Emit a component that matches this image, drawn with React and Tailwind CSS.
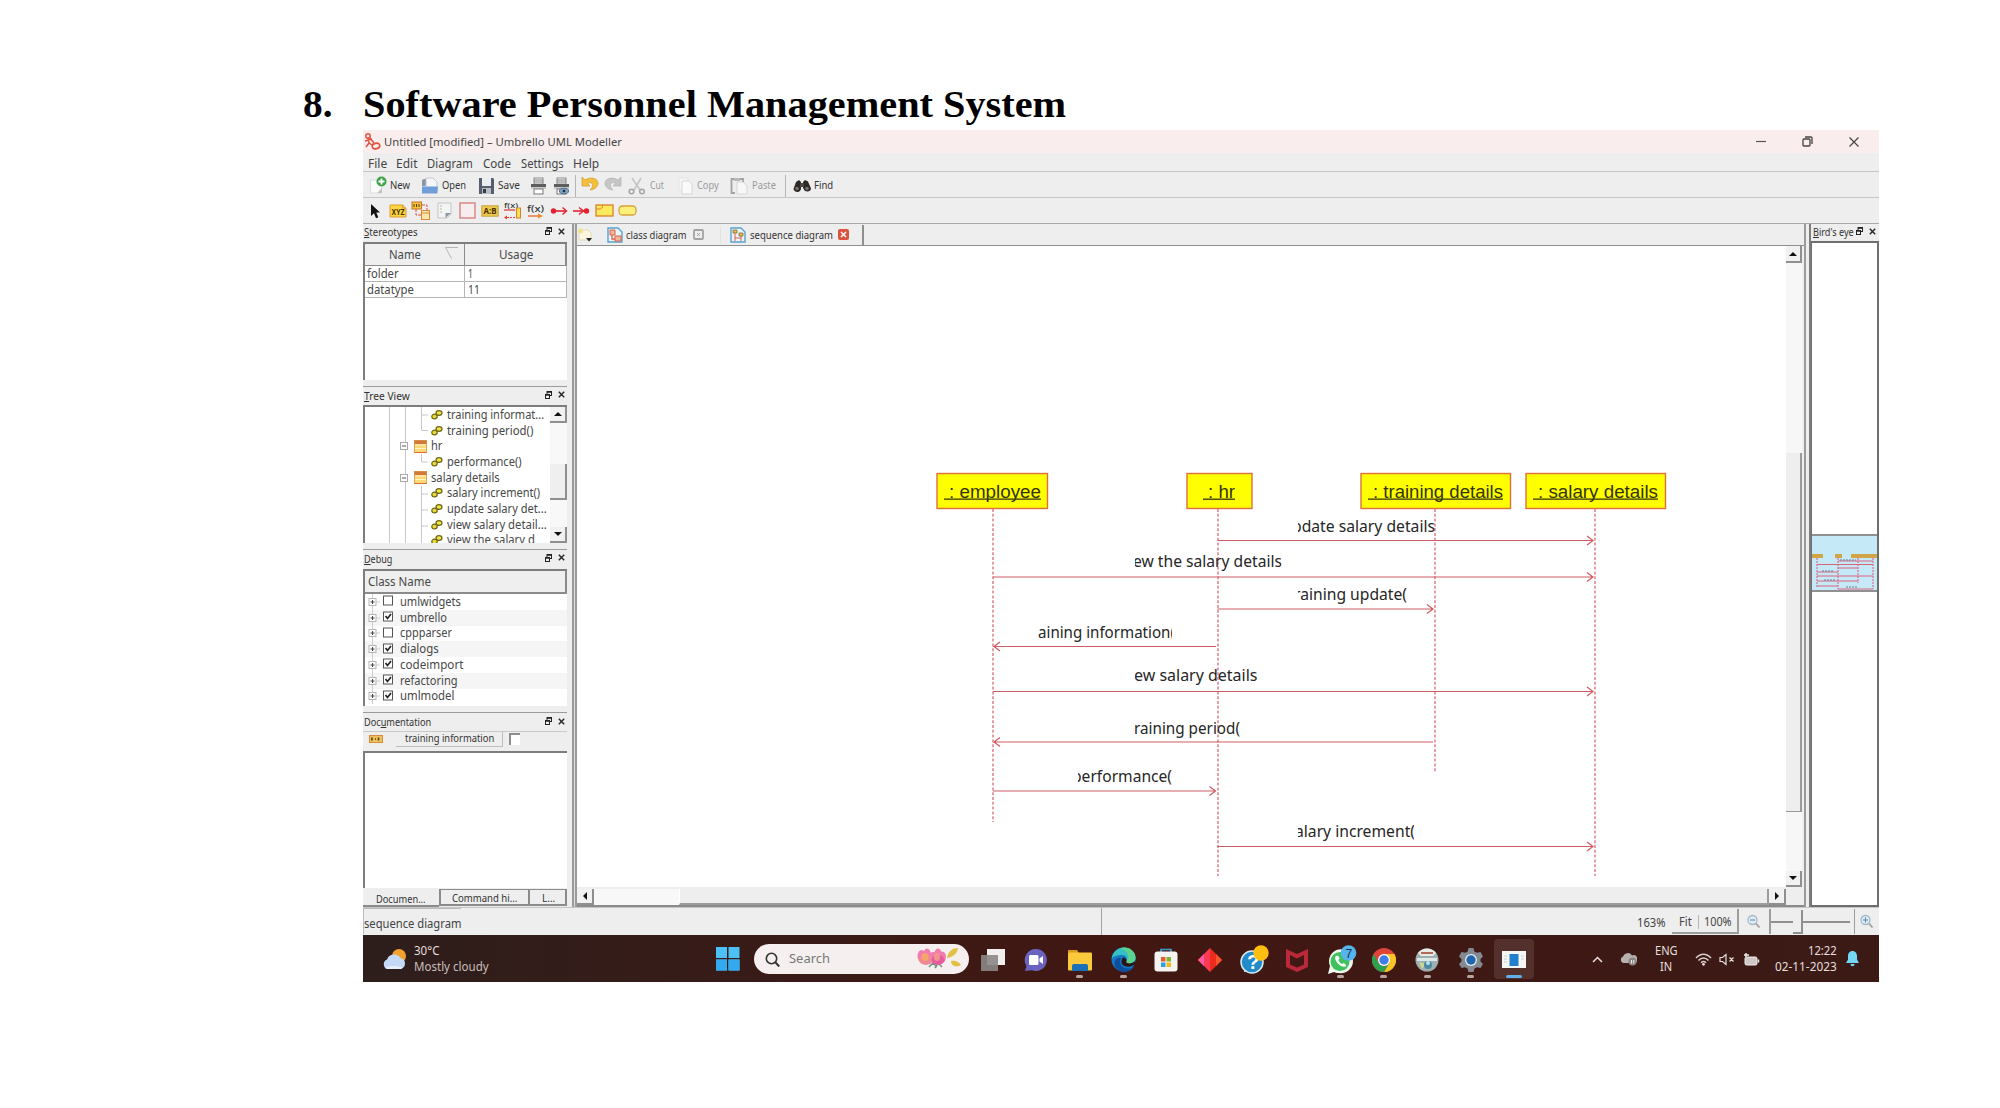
import React, { useLayoutEffect, useRef, useState } from "react";

const UI = "font-['Noto_Sans','Open_Sans',sans-serif]";

function Fit({ w, className = "", children }) {
  const ref = useRef(null);
  const [k, setK] = useState(1);
  useLayoutEffect(() => {
    const n = ref.current.offsetWidth;
    if (n) setK(w / n);
  }, [w]);
  return (
    <span className={"inline-block shrink-0 whitespace-nowrap " + className} style={{ width: w }}>
      <span ref={ref} className="inline-block origin-left whitespace-nowrap" style={{ transform: `scaleX(${k})` }}>
        {children}
      </span>
    </span>
  );
}

function Svg({ w, h, vb, className = "", children }) {
  return (
    <svg width={w} height={h} viewBox={vb || `0 0 ${w} ${h}`} className={"block shrink-0 " + className} fill="none">
      {children}
    </svg>
  );
}

/* ---------- toolbar icons ---------- */
const NewIcon = () => (
  <Svg w={18} h={18}>
    <path d="M1.500 4h8l3 3v10h-11z" fill="#fbfbfb" stroke="#dcdcdc" />
    <path d="M8 17l5-5v5z" fill="#c2c2c2" />
    <circle cx="12.500" cy="5.500" r="5" fill="#3ba345" />
    <path d="M12.500 2.500v6M9.500 5.500h6" stroke="#fff" strokeWidth="1.800" />
  </Svg>
);
const OpenIcon = () => (
  <Svg w={18} h={18}>
    <path d="M1 3l2-1h3v10H1z" fill="#8b97a5" />
    <path d="M5 1h7l4 4v8H5z" fill="#f4f6f8" stroke="#b9c0c8" strokeWidth=".8" />
    <path d="M1 9h16l-.6 7.5H1z" fill="#6f9fd6" />
    <path d="M1 9h16v1H1z" fill="#a9c8ec" />
  </Svg>
);
const SaveIcon = () => (
  <Svg w={17} h={18}>
    <path d="M1 1h14l1 1v15H1z" fill="#56606c" />
    <rect x="4" y="1" width="9" height="8" fill="#e9edf2" />
    <rect x="4" y="11" width="9" height="6" fill="#b7bec7" />
    <rect x="5" y="12" width="3" height="4" fill="#333b45" />
  </Svg>
);
const PrintIcon = ({ eye }) => (
  <Svg w={17} h={18}>
    <rect x="4" y="1" width="9" height="6" fill="#fff" stroke="#8a8a8a" />
    <path d="M4 3h9M4 5h9" stroke="#777" />
    <rect x="1" y="7" width="15" height="3" fill="#5d5d5d" />
    <rect x="1" y="10" width="15" height="2" fill="#c9c9c9" />
    <rect x="4" y="12" width="9" height="5" fill="#fff" stroke="#777" />
    {eye && <ellipse cx="11" cy="14" rx="4.600" ry="2.800" fill="#7ea1c4" stroke="#3e5f80" strokeWidth=".8" />}
    {eye && <circle cx="11" cy="14" r="1.300" fill="#1d2a36" />}
  </Svg>
);
const UndoIcon = ({ gray }) => (
  <Svg w={18} h={16} className={gray ? "-scale-x-100" : ""}>
    <path d="M1 1v9h8L6.500 7.300C9 5.800 11.800 6.800 11.500 9.500 11.300 11.500 10.500 12.800 9 14 14 13.500 17.200 10.500 17 7 16.500 2 9.500.500 4 4z" fill={gray ? "#c6c6c6" : "#f4c03c"} stroke={gray ? "#b2b2b2" : "#d39a26"} strokeWidth=".7" />
  </Svg>
);
const CutIcon = () => (
  <Svg w={18} h={18}>
    <path d="M4 1l8 12M13 1L6 13" stroke="#c4c4c4" strokeWidth="1.600" />
    <circle cx="3.500" cy="14.500" r="2.300" stroke="#a4a4a4" strokeWidth="1.500" />
    <circle cx="14" cy="14.500" r="2.300" stroke="#a4a4a4" strokeWidth="1.500" />
  </Svg>
);
const CopyIcon = () => (
  <Svg w={15} h={18}>
    <path d="M1 1h9v12H1z" fill="#f6f6f6" stroke="#e2e2e2" />
    <path d="M4 4h7l3 3v10H4z" fill="#fafafa" stroke="#d6d6d6" />
  </Svg>
);
const PasteIcon = () => (
  <Svg w={18} h={18}>
    <path d="M4 2H1.500v14H5M10 2h3v3" stroke="#a3a3a3" strokeWidth="1.800" />
    <path d="M4 1h6v3H4z" fill="#b8b8b8" />
    <path d="M7 5h6l4 4v8H7z" fill="#f7f7f7" stroke="#d6d6d6" />
  </Svg>
);
const FindIcon = () => (
  <Svg w={18} h={14}>
    <path d="M3 3l3-2 2 2v7l-1 2c-2 2-6 1-6.500-2z" fill="#2c2a28" />
    <path d="M10 3l2-2 3 1.500 3 7c0 3-4 4-6.500 2L10 9z" fill="#2c2a28" />
    <rect x="7" y="4" width="4" height="4" fill="#4a4744" />
    <circle cx="4" cy="9.500" r="1.800" fill="#77706a" />
    <circle cx="14" cy="9.500" r="1.800" fill="#77706a" />
  </Svg>
);

/* ---------- diagram tool icons ---------- */
const TinyText = ({ x, y, size = 7, fill = "#4a2f00", weight = "700", len, children }) => (
  <text x={x} y={y} fontSize={size} fontWeight={weight} fill={fill} textLength={len} lengthAdjust="spacingAndGlyphs" fontFamily="Noto Sans, sans-serif">{children}</text>
);
const ArrowTool = () => (
  <Svg w={18} h={18}><path d="M5 2v12l3-2.800 2 5 2.300-1-2-4.700H14z" fill="#111" /></Svg>
);
const XyzTool = () => (
  <Svg w={18} h={14}>
    <path d="M1 1h13l3 3v9H1z" fill="#fbd63e" stroke="#e29a35" />
    <path d="M14 1v3h3" fill="#fff0a8" stroke="#d9812a" />
    <TinyText x={2.500} y={11} size={8} len={13}>XYZ</TinyText>
  </Svg>
);
const BoxesTool = () => (
  <Svg w={20} h={20}>
    <rect x="1" y="1" width="9.500" height="7" fill="#f2c63b" stroke="#c8702a" />
    <path d="M3 3v3M5.500 3v3M8 3v3" stroke="#5e3b00" />
    <path d="M11 4h5v5M5 8v6h5" stroke="#d9534a" strokeDasharray="3 1" />
    <rect x="10.500" y="9.500" width="8" height="9" fill="#fbe7a8" stroke="#d98a3d" />
    <path d="M10 12h8.500" stroke="#d9853a" />
  </Svg>
);
const NoteTool = () => (
  <Svg w={15} h={17}>
    <path d="M1 1h13v11l-4 4H1z" fill="#f4f5f3" stroke="#c2c5c2" />
    <path d="M8.500 16v-5H14z" fill="#8e9aa5" />
    <path d="M3 4h2M3 7h2M3 10h2" stroke="#b5bab5" />
  </Svg>
);
const RectTool = () => (
  <Svg w={17} h={17}><rect x="1" y="1" width="15" height="15" fill="#f6eeee" stroke="#d98080" strokeWidth="1.400" /></Svg>
);
const AbTool = () => (
  <Svg w={18} h={12}>
    <rect x=".800" y=".800" width="16.400" height="10.400" fill="#ecc94b" stroke="#c9a340" />
    <TinyText x={2.500} y={9} size={8} len={13}>A:B</TinyText>
  </Svg>
);
const FxTool1 = () => (
  <Svg w={19} h={18}>
    <TinyText x={1} y={6} size={7} len={14} weight="500" fill="#333">f(x)</TinyText>
    <path d="M1 8h11" stroke="#e0413a" strokeWidth="1.300" />
    <path d="M12 15.500H2" stroke="#e0413a" strokeWidth="1.200" strokeDasharray="2 1" />
    <path d="M4 13.500l-3 2 3 2" fill="#e0413a" />
    <rect x="13.500" y="6" width="4" height="10" fill="#fbe04f" stroke="#d9812a" />
  </Svg>
);
const FxTool2 = () => (
  <Svg w={18} h={16}>
    <TinyText x={0} y={9} size={9} len={17} weight="500" fill="#333">f(x)</TinyText>
    <path d="M1 13h11" stroke="#e8602c" strokeWidth="1.300" />
    <path d="M11 10.500l5 2.500-5 2.500z" fill="#f08a2c" />
  </Svg>
);
const FoundTool = ({ right }) => (
  <Svg w={18} h={10}>
    <path d="M1 5h15" stroke="#e22232" strokeWidth="1.600" />
    {right ? <path d="M7 1.500L11.500 5 7 8.500" stroke="#e22232" strokeWidth="1.400" /> : <path d="M12.500 1.500L16.500 5l-4 3.500" stroke="#e22232" strokeWidth="1.400" />}
    <circle cx={right ? 14.500 : 3.500} cy="5" r="2.700" fill="#e22232" />
  </Svg>
);
const FragTool = () => (
  <Svg w={19} h={13}>
    <rect x="1" y="1" width="17" height="11" fill="#fbe95e" stroke="#d9812a" strokeWidth="1.300" />
    <path d="M1 5h4.500L7.500 3V1" stroke="#d9812a" />
  </Svg>
);
const PillTool = () => (
  <Svg w={19} h={11}><rect x="1" y="1" width="17" height="9" rx="3.500" fill="#fdf07a" stroke="#d9a13f" strokeWidth="1.300" /></Svg>
);

/* ---------- dock parts ---------- */
function DockButtons() {
  return (
    <span className="-mt-[2px] flex items-center gap-[6px]">
      <Svg w={7} h={8}>
        <rect x="2" y=".500" width="4.500" height="4" stroke="#222" />
        <path d="M2 1h5" stroke="#222" strokeWidth="1.600" />
        <rect x=".500" y="3.500" width="4" height="4" fill="#eee" stroke="#222" />
        <path d="M0 4h5" stroke="#222" strokeWidth="1.400" />
      </Svg>
      <Svg w={7} h={7}><path d="M.800.800l5.400 5.400M6.200.800L.800 6.200" stroke="#2a2a2a" strokeWidth="1.500" /></Svg>
    </span>
  );
}
function DockTitle({ a, u, b, w, className = "h-[18px] pb-[1px]" }) {
  return (
    <div className={"flex items-center justify-between border-t border-[#9b9b9b] bg-[#eeeeee] pl-[1px] pr-[2px] text-[10px] leading-none text-[#333] " + className}>
      <Fit w={w}>{a}<span className="underline">{u}</span>{b}</Fit>
      <DockButtons />
    </div>
  );
}
function ArrowBtn({ dir, className = "" }) {
  const d = { up: "M0 6h8L4 2z", down: "M0 2h8L4 6z", left: "M6 0v8L2 4z", right: "M2 0v8l4-4z" }[dir];
  return (
    <div className={"flex shrink-0 items-center justify-center border-b-2 border-r-2 border-[#8f8f8f] bg-[#f1f1f1] " + className}>
      <Svg w={8} h={8}><path d={d} fill="#111" /></Svg>
    </div>
  );
}

const LinkIcon = () => (
  <Svg w={12} h={12}>
    <ellipse cx="3.500" cy="7.500" rx="2.700" ry="2.300" fill="#e9dc3a" stroke="#6c6518" strokeWidth="1.200" />
    <ellipse cx="8" cy="4" rx="3" ry="2.400" fill="#f1e545" stroke="#6c6518" strokeWidth="1.200" />
  </Svg>
);
const ClassIcon = () => (
  <Svg w={13} h={13}>
    <rect x=".500" y=".500" width="12" height="12" fill="#fbd976" stroke="#e0a04d" />
    <rect x=".500" y=".500" width="12" height="3.500" fill="#d07a3c" />
    <path d="M1 5h11M1 8.500h11" stroke="#fff3cf" />
    <path d="M.500 12.500h12" stroke="#dd6f35" />
  </Svg>
);

const TREE = [
  ["op", "training informat...", 97], ["op", "training period()", 86], ["cls", "hr", 11],
  ["op", "performance()", 75], ["cls", "salary details", 69], ["op", "salary increment()", 93],
  ["op", "update salary det...", 100], ["op", "view salary detail...", 100], ["op", "view the salary d", 88],
];
const DEBUG = [
  ["umlwidgets", 61, 0], ["umbrello", 47, 1], ["cppparser", 52, 0], ["dialogs", 39, 1],
  ["codeimport", 63, 1], ["refactoring", 58, 1], ["umlmodel", 54, 1],
];

function LeftDock() {
  return (
    <aside className="flex w-[204px] shrink-0 flex-col bg-[#eeeeee]">
      <DockTitle u="S" b="tereotypes" w={54} className="h-[18px] border-t-transparent pb-[3px]" />
      <div className="h-[138px] border-l-2 border-t-2 border-[#7d7d7d] bg-white text-[12px] leading-none text-[#484848]">
        <div className="flex h-[22px] border-b border-r-2 border-[#8b8b8b] bg-[#efefef]">
          <div className="flex w-[100px] items-center border-r border-[#8b8b8b] pl-[24px]">
            <Fit w={32}>Name</Fit>
            <Svg w={14} h={12} className="ml-[24px] -mt-[4px]"><path d="M13 .500H.500l6 11" stroke="#b5b5b5" /></Svg>
          </div>
          <div className="flex flex-1 items-center pl-[34px]"><Fit w={34}>Usage</Fit></div>
        </div>
        {[["folder", 32, "1", 5], ["datatype", 47, "11", 12]].map(([n, w, v, vw]) => (
          <div key={n} className="flex h-[16px] border-b border-r border-[#b5b5b5]">
            <div className="flex w-[100px] items-center border-r border-[#b5b5b5] pl-[2px]"><Fit w={w}>{n}</Fit></div>
            <div className="flex items-center pl-[3px]"><Fit w={vw}>{v}</Fit></div>
          </div>
        ))}
      </div>
      <div className="h-[6px]" />
      <DockTitle u="T" b="ree View" w={46} className="h-[19px] pb-[1px]" />
      <div className="flex h-[138px] overflow-hidden border-l-2 border-t-2 border-[#7d7d7d] bg-white">
        <div className="relative w-[185px] overflow-hidden text-[12px] leading-none text-[#484848]">
          <Svg w={70} h={138} className="absolute left-0 top-0">
            <path d="M24.500 0v138M40.500 0v138M56.500 0v23.500M56.500 47v8M56.500 79v59M57 8h6M57 23.500h6M57 55h6M57 87h6M57 103h6M57 119h6" stroke="#c9c9c9" />
          </Svg>
          {TREE.map(([kind, label, w]) => (
            <div key={label} className={"relative flex h-[15.700px] items-center " + (kind === "op" ? "pl-[66px]" : "pl-[35px]")}>
              {kind === "op" ? <LinkIcon /> : (
                <>
                  <Svg w={8} h={8} className="mr-[6px]"><rect x=".500" y=".500" width="7" height="7" fill="#fff" stroke="#a9a9a9" /><path d="M2 4h4" stroke="#555" /></Svg>
                  <ClassIcon />
                </>
              )}
              <Fit w={w} className="ml-[4px]">{label}</Fit>
            </div>
          ))}
        </div>
        <div className="flex w-[17px] flex-col bg-[#f8f8f8]">
          <ArrowBtn dir="up" className="h-[16px]" />
          <div className="mt-[41px] h-[36px] border-b-2 border-r-2 border-[#8f8f8f] bg-[#efefef]" />
          <ArrowBtn dir="down" className="mt-auto h-[16px]" />
        </div>
      </div>
      <div className="h-[6px]" />
      <DockTitle u="D" b="ebug" w={28} className="h-[20px] pb-[2px]" />
      <div className="h-[137px] border-l-2 border-t-2 border-[#7d7d7d] bg-white text-[12px] leading-none text-[#484848]">
        <div className="flex h-[23px] items-center border-b-2 border-r-2 border-[#8b8b8b] bg-[#efefef] pl-[3px]"><Fit w={63}>Class Name</Fit></div>
        {DEBUG.map(([n, w, on], i) => (
          <div key={n} className={"flex h-[15.770px] items-center pl-[3px] " + (i % 2 ? "bg-[#f5f5f5]" : "")}>
            <Svg w={12} h={16}>
              <path d="M4.500 0v16M8 8h4" stroke="#cfcfcf" />
              <rect x="1" y="4.500" width="7" height="7" fill="#fff" stroke="#b5b5b5" />
              <path d="M2.500 8h4M4.500 6v4" stroke="#444" />
            </Svg>
            <Svg w={11} h={11} className="ml-[3px] mb-[2px]">
              <rect x=".500" y="1" width="9" height="9" fill="#fff" stroke="#555" />
              {on ? <path d="M2.500 5l2 2.500L8 3" stroke="#222" strokeWidth="1.700" /> : null}
            </Svg>
            <Fit w={w} className="ml-[6px]">{n}</Fit>
          </div>
        ))}
      </div>
      <div className="h-[6px]" />
      <DockTitle a="Doc" u="u" b="mentation" w={67} className="h-[19px]" />
      <div className="flex h-[20px] items-start border-t border-[#c9c9c9] text-[10px] leading-none text-[#333]">
        <Svg w={14} h={8} className="ml-[6px] mt-[3px]">
          <rect x=".500" y=".500" width="13" height="7" fill="#edc25a" stroke="#d98a3d" />
          <path d="M3 2.500v3M9.500 2.500v3M6 4h1" stroke="#5a3a10" strokeWidth="1.600" />
        </Svg>
        <div className="ml-[13px] flex h-[15px] w-[107px] items-center border-b border-r border-[#bdbdbd] pb-[2px] pl-[9px]"><Fit w={89}>training information</Fit></div>
        <div className="ml-[6px] mt-[1px] h-[12px] w-[11px] border-l-2 border-t-2 border-[#8d8d8d] bg-white" />
      </div>
      <div className="h-[137px] border-l-2 border-t-2 border-[#7d7d7d] bg-white" />
      <div className="flex items-start pt-[1px] text-[10px] leading-none text-[#333]">
        <div className="flex h-[18px] w-[76px] items-center border-b-2 border-[#8b8b8b] pl-[13px] pt-[3px]"><Fit w={50}>Documen...</Fit></div>
        <div className="flex h-[17px] w-[91px] items-center border-2 border-t border-[#8b8b8b] pl-[11px] pt-[1px]"><Fit w={65}>Command hi...</Fit></div>
        <div className="flex h-[17px] w-[37px] items-center border-b-2 border-r-2 border-t border-[#8b8b8b] pl-[12px] pt-[1px]"><Fit w={13}>L...</Fit></div>
      </div>
    </aside>
  );
}

/* ---------- sequence diagram ---------- */
const OX = 577, OY = 246;
const OBJECTS = [
  [937, 110.500, "employee", 993, 822, 945, 96], [1187, 65, "hr", 1218, 876, 1204, 31],
  [1361, 149.500, "training details", 1435, 772, 1369, 134], [1526, 139.500, "salary details", 1595, 876, 1534, 124],
];
const MESSAGES = [
  [540.500, 1217.500, 1594], [577, 993, 1594], [609, 1217.500, 1434], [646.500, 1216, 993],
  [691.500, 993, 1594], [742, 1433, 993], [791, 993, 1216.500], [846.500, 1217.500, 1594],
];
const LABELS = [
  [1298, 137, 531.500, "pdate salary details", -6, 143], [1135, 146.500, 567, "ew the salary details", -2, 149],
  [1298, 109, 599.500, "raining update(", -4, 113], [1038, 134, 637.500, "aining information(", 0, 137],
  [1135, 122.500, 681, "ew salary details", -1, 123.500], [1135, 105, 733.500, "raining period(", -1, 106],
  [1078, 94, 782, "performance(", -6, 100], [1298, 116, 837, "alary increment(", -3, 120],
];
function Diagram() {
  return (
    <Svg w={1209} h={641} vb={`${OX} ${OY} 1209 641`}>
      {OBJECTS.map(([x, w, name, lx, end, tx, tw]) => (
        <g key={name}>
          <rect x={x} y="473.500" width={w} height="35" fill="#ffff00" stroke="#e0703a" strokeWidth="1.400" />
          <text x={tx + 4} y="497.500" fontSize="17.500" fill="#33330a" textLength={tw - 4} lengthAdjust="spacingAndGlyphs" fontFamily="Liberation Sans, sans-serif">{": " + name}</text>
          <path d={`M${tx - 1} 499.200h${tw + 1}`} stroke="#33330a" strokeWidth="1.300" />
          <path d={`M${lx} 509V${end}`} stroke="#d6606c" strokeWidth="1.200" strokeDasharray="3 1.800" />
        </g>
      ))}
      {MESSAGES.map(([y, a, b]) => {
        const s = b > a ? -1 : 1;
        const tip = b > a ? b - 1 : b + 1;
        return <path key={y} d={`M${a} ${y}H${tip}M${tip + s * 6} ${y - 4.500}L${tip} ${y}L${tip + s * 6} ${y + 4.500}`} stroke="#cf5c62" strokeWidth="1.200" />;
      })}
      {LABELS.map(([x, w, y, t, dx, len]) => (
        <svg key={y} x={x} y={y - 15} width={w} height="21" overflow="hidden">
          <text x={dx} y="15" fontSize="15.500" fill="#262626" textLength={len} lengthAdjust="spacingAndGlyphs" fontFamily="Noto Sans, sans-serif">{t}</text>
        </svg>
      ))}
    </Svg>
  );
}

function DocTabs() {
  return (
    <div className="flex h-[23px] items-center border-b border-[#8f8f8f] text-[10px] leading-none text-[#333]">
      <Svg w={16} h={16}>
        <path d="M2 3h9l3 3v7H2z" fill="#fbf7e2" stroke="#e2dcb8" />
        <circle cx="3.500" cy="4" r="2.500" fill="#f3e08a" />
        <path d="M9 11h6l-3 3.500z" fill="#222" />
      </Svg>
      <Svg w={16} h={16} className="ml-[14px]">
        <path d="M1 1h10l4 4v10H1z" fill="#e8f3fa" stroke="#58a4cc" strokeWidth="1.400" />
        <path d="M3 3h5v5H3zM8 9h6v5H8z" fill="#f4b69c" stroke="#de6244" />
        <path d="M5 8v4h3" stroke="#de6244" strokeWidth="1.300" />
      </Svg>
      <Fit w={61} className="ml-[3px]">class diagram</Fit>
      <Svg w={11} h={11} className="ml-[6px]"><rect x="1" y="1" width="9" height="9" rx="1" stroke="#a3a3a3" strokeWidth="1.800" /><path d="M4 4l3 3M7 4L4 7" stroke="#a3a3a3" /></Svg>
      <div className="ml-[16px] h-[16px] w-px bg-[#e2e2e2]" />
      <Svg w={16} h={16} className="ml-[9px]">
        <path d="M1 1h10l4 4v10H1z" fill="#e8f3fa" stroke="#58a4cc" strokeWidth="1.400" />
        <path d="M3 3h4v3H3zM9 6h4v3H9z" fill="#e9b94d" stroke="#8a6a3a" strokeWidth=".800" />
        <path d="M5 6v8M11 9v5M5 11h6" stroke="#de6244" />
      </Svg>
      <Fit w={83} className="ml-[4px]">sequence diagram</Fit>
      <Svg w={11} h={11} className="ml-[5px]"><rect width="11" height="11" rx="2" fill="#d9533f" /><path d="M3 3l5 5M8 3L3 8" stroke="#fff" strokeWidth="1.500" /></Svg>
      <div className="ml-[13px] h-[20px] w-[2px] bg-[#8f8f8f]" />
    </div>
  );
}

function Center() {
  return (
    <main className="flex w-[1229px] shrink-0 flex-col border-r-2 border-[#9b9b9b] bg-[#eeeeee]">
      <DocTabs />
      <div className="flex h-[641px]">
        <div className="w-[1209px] bg-white"><Diagram /></div>
        <div className="flex w-[16px] flex-col bg-[#f7f7f7]">
          <ArrowBtn dir="up" className="h-[17px]" />
          <div className="mt-[190px] h-[359px] border-b border-r-2 border-[#9a9a9a] bg-[#eeeeee]" />
          <ArrowBtn dir="down" className="mt-auto h-[16px]" />
        </div>
      </div>
      <div className="flex h-[20px] items-start border-b-2 border-[#8b8b8b] pt-[2px]">
        <ArrowBtn dir="left" className="h-[16px] w-[17px]" />
        <div className="h-[16px] w-[85px] bg-[#f8f8f8]" />
        <div className="h-[16px] w-[1090px] border-b-2 border-l border-r-2 border-[#9d9d9d] border-l-white bg-[#eeeeee]" />
        <ArrowBtn dir="right" className="h-[16px] w-[17px]" />
      </div>
    </main>
  );
}

function BirdsEye() {
  return (
    <aside className="ml-[3px] flex w-[70px] shrink-0 flex-col border-l-2 border-[#7d7d7d]">
      <div className="flex h-[17px] items-center bg-[#eeeeee] pb-[1px] pl-[2px] text-[10px] leading-none text-[#333]">
        <Fit w={41}><span className="underline">B</span>ird's eye</Fit>
        <span className="ml-[2px]"><DockButtons /></span>
      </div>
      <div className="flex flex-1 flex-col border-2 border-l border-[#6e6e6e] bg-white">
        <div className="mt-[291px] h-[58px] border-y-2 border-[#909090] bg-[#c6e9f8]">
          <Svg w={65} h={54}>
            <path d="M0 20h11M23 20h7M39 20h26" stroke="#d0a447" strokeWidth="4" />
            <path d="M5 22v29M26 22v31M46 22v25M61 22v31" stroke="#e0567c" strokeDasharray="2 1" />
            <path d="M26 25h35M5 28.500h56M26 32h20M5 36h21M5 40h56M5 45h41M5 50h21M26 53h35" stroke="#d8647c" />
            <path d="M28 24h16M10 35h12M12 44h12M34 51h12" stroke="#6f7d8c" strokeDasharray="2 1" />
          </Svg>
        </div>
      </div>
    </aside>
  );
}

/* ---------- status bar ---------- */
const Mag = ({ plus }) => (
  <Svg w={14} h={15}>
    <circle cx="5.500" cy="6" r="4.500" fill="#dcebf5" stroke="#a5b8c6" strokeWidth="1.300" />
    <path d={plus ? "M3 6h5M5.500 3.500v5" : "M3 6h5"} stroke="#5f86a3" />
    <path d="M9 9.500l3.500 4" stroke="#a0a0a0" strokeWidth="1.800" />
  </Svg>
);
function StatusBar() {
  return (
    <div className="flex h-[28px] items-center border-t border-[#c4c4c4] bg-[#eeeeee] text-[12px] leading-none text-[#444]">
      <div className="flex h-[26px] w-[98px] items-center self-start border-l border-t border-[#bcbcbc] pt-[4px]"><Fit w={97}>sequence diagram</Fit></div>
      <div className="ml-[640px] h-[27px] w-px bg-[#a3a3a3]" />
      <Fit w={29} className="ml-[535px] pt-[2px]">163%</Fit>
      <div className="ml-[6px] flex h-[25px] w-[67px] items-center border-b-2 border-r-2 border-[#9d9d9d] pl-[7px] pt-[3px]">
        <Fit w={13}>Fit</Fit>
        <span className="ml-[6px] h-[14px] w-px bg-[#b5b5b5]" />
        <Fit w={28} className="ml-[5px]">100%</Fit>
      </div>
      <div className="flex h-[25px] w-[32px] items-center justify-center border-r-2 border-[#9d9d9d]"><Mag /></div>
      <div className="h-[2px] w-[22px] bg-[#8f8f8f]" />
      <div className="h-[24px] w-[10px] border-b-2 border-r-2 border-[#8f8f8f]" />
      <div className="h-[2px] w-[47px] bg-[#8f8f8f]" />
      <div className="ml-[4px] flex h-[25px] w-[25px] items-center justify-center border-l border-[#9d9d9d]"><Mag plus /></div>
    </div>
  );
}

/* ---------- taskbar ---------- */
const Running = () => <span className="h-[3px] w-[7px] rounded-full bg-[#b5a5a1]" />;
function TaskApp({ run, active, children, className = "" }) {
  return (
    <div className={"flex h-[47px] w-[43.450px] shrink-0 flex-col items-center " + className}>
      <div className={"mt-[3px] flex h-[40px] w-[40px] flex-col items-center rounded pt-[6px] " + (active ? "bg-[#53302c]" : "")}>
        <div className="flex h-[30px] items-center">{children}</div>
        {run && <Running />}
        {active && <span className="h-[3px] w-[16px] rounded-full bg-[#5fb0ea]" />}
      </div>
    </div>
  );
}
function Taskbar() {
  return (
    <div className="flex h-[47px] items-center bg-gradient-to-r from-[#2d1e1c] via-[#421712] to-[#3b1a16] pt-[1px] text-[12px] leading-none text-[#e6dfdd]">
      <Svg w={25} h={22} className="ml-[19px]">
        <circle cx="17" cy="8" r="7" fill="#f2a02e" />
        <path d="M5.500 21a5 5 0 01-.500-9.500A7.500 7.500 0 0118.500 10 5.700 5.700 0 0119 21z" fill="#c4d9f5" />
        <path d="M3 20c5-3 12-2 18-.500L19 21H5.500z" fill="#e6effc" />
      </Svg>
      <div className="ml-[7px] flex w-[80px] flex-col gap-[4px]">
        <Fit w={25}>30°C</Fit>
        <Fit w={75} className="text-[#c9bfbd]">Mostly cloudy</Fit>
      </div>
      <Svg w={24} h={24} className="ml-[222px]">
        <path d="M0 0h11v11H0zM12.500 0h11v11h-11zM0 12.500h11v11H0zM12.500 12.500h11v11h-11z" fill="#4dc1f5" />
        <path d="M0 12.500h11v11H0zM12.500 12.500h11v11h-11z" fill="#33aaf0" />
      </Svg>
      <div className="ml-[14px] flex h-[30px] w-[215px] items-center rounded-full bg-[#f5f0ef] pl-[11px] text-[#777]">
        <Svg w={15} h={15}><circle cx="6.500" cy="6.500" r="5.200" stroke="#333" strokeWidth="1.600" /><path d="M10.500 10.500l3.700 4" stroke="#333" strokeWidth="2" /></Svg>
        <Fit w={41} className="ml-[9px]">Search</Fit>
        <Svg w={46} h={24} className="ml-[87px]">
          <path d="M12 20l4-4 4 4M18 21l3-5 4 4" stroke="#6f8f7a" strokeWidth="1.500" />
          <g fill="#f07cb0">
            <ellipse cx="4.500" cy="9" rx="4" ry="6" /><ellipse cx="10" cy="8" rx="4" ry="6.500" /><ellipse cx="16" cy="10" rx="4" ry="5" /><ellipse cx="21" cy="8" rx="4" ry="6.500" /><ellipse cx="25.500" cy="10" rx="3.500" ry="5.500" />
          </g>
          <ellipse cx="9" cy="13" rx="7" ry="5" fill="#ef8a95" /><ellipse cx="21" cy="13" rx="6.500" ry="5" fill="#e85a9e" />
          <ellipse cx="8" cy="10" rx="3.500" ry="4" fill="#f7a46b" /><ellipse cx="20" cy="10" rx="3" ry="4" fill="#f2958e" />
          <path d="M30 11c1-7 6-10 11-10 0 4-4 9-11 10zM34 14c5-1 9 2 10 4-5 3-10 1-10-4z" fill="#e2c045" />
        </Svg>
      </div>
      <TaskApp className="ml-[2px]"><Svg w={24} h={24}><rect x="6" y="1" width="18" height="16" fill="#f1efee" /><rect x="0" y="7" width="17" height="16" fill="#8b8786" fillOpacity=".9" /></Svg></TaskApp>
      <TaskApp>
        <Svg w={24} h={24}>
          <path d="M12 1a11 11 0 11-4 21.300L1 23l1.500-5A11 11 0 0112 1z" fill="#6a64c0" />
          <rect x="5" y="7" width="9.500" height="10" rx="1.500" fill="#fff" /><path d="M15.500 10.500L19 8v8l-3.500-2.500z" fill="#fff" />
        </Svg>
      </TaskApp>
      <TaskApp run>
        <Svg w={24} h={22}>
          <path d="M0 1h9l2 3H0z" fill="#d99a1d" /><rect y="3.500" width="24" height="18" rx="1" fill="#fbc93c" />
          <path d="M4 22v-5a2 2 0 012-2h12a2 2 0 012 2v5z" fill="#1870b8" />
        </Svg>
      </TaskApp>
      <TaskApp run>
        <Svg w={25} h={25}>
          <circle cx="12.500" cy="12.500" r="12" fill="#1579c4" />
          <path d="M.600 12C1.500 5 7 .500 13 .500c7 0 11.500 5 11.500 10 0 4-3 6-6 6-2.500 0-4-1-3-2.500 1.500-2.500-.500-6-4.500-6C6.500 8 2 9 .600 12z" fill="#35c1c4" />
          <path d="M13 .500c7 0 11.500 5 11.500 10 0 4-3 6-6 6-2.500 0-4-1-3-2.500C19 10 18 4 9 1.200z" fill="#5bd38c" />
          <path d="M10 11c-3 5 1 11 8 10.500 2 0 4-1 5-2-2 4-6 5.500-10 5.500C6 25 2 18 4 14c1-3 4-4 6-3z" fill="#0d4f9e" />
          <path d="M15.500 14c-1 1.500.500 2.500 3 2.500 2 0 4-1 5-2.500l.500 3c-3 3-10 4-13 0-1-2-.500-5 1-6.500 2 0 4 2 3.500 3.500z" fill="#2a1514" />
        </Svg>
      </TaskApp>
      <TaskApp>
        <Svg w={24} h={24}>
          <path d="M7 4V1.500h10V4" stroke="#3f9ed0" strokeWidth="1.700" /><rect x=".500" y="3.500" width="23" height="20" rx="3" fill="#f5f3f2" />
          <path d="M7 9h4.500v4.500H7z" fill="#e65a2e" /><path d="M12.500 9H17v4.500h-4.500z" fill="#7eb52e" /><path d="M7 14.500h4.500V19H7z" fill="#2ba3e0" /><path d="M12.500 14.500H17V19h-4.500z" fill="#f4b81f" />
        </Svg>
      </TaskApp>
      <TaskApp>
        <Svg w={24} h={24}><path d="M12 0L0 12l12 12z" fill="#fb3a55" /><path d="M12 0l12 12-12 12z" fill="#ee2a1c" /><path d="M6 6v12L0 12z" fill="#ff5aa0" /><path d="M18 6l6 6-6 6z" fill="#f4552a" /></Svg>
      </TaskApp>
      <TaskApp>
        <Svg w={30} h={30} className="ml-[3px]">
          <path d="M4 27l1-6 5 4z" fill="#eaf4fa" /><circle cx="12" cy="17" r="11" fill="#238bc8" stroke="#d8ecf6" strokeWidth="1.500" />
          <text x="7" y="24" fontSize="20" fontWeight="700" fill="#fff" fontFamily="Liberation Sans, sans-serif">?</text>
          <circle cx="21" cy="8" r="7.700" fill="#fdbe12" />
        </Svg>
      </TaskApp>
      <TaskApp>
        <Svg w={22} h={24}><path d="M0 1l11 5 11-5v18l-11 5-11-5zM4 7v9.500l7 3 7-3V7l-7 3.500z" fill="#b9293a" fillRule="evenodd" /></Svg>
      </TaskApp>
      <TaskApp run>
        <Svg w={30} h={30} className="ml-[4px]">
          <path d="M1 29l2-8A12 12 0 1112 28c-3 0-4-.500-5-1z" fill="#eef6ee" /><circle cx="13" cy="16.500" r="9.500" fill="#3fc15c" />
          <path d="M9 11c-2 2 0 6 3 8.500s6 3 7.500 1l-2.500-2.500-2 1c-2-1-3-2.500-3.500-4l1.200-1.500L11 10.500z" fill="#fff" />
          <circle cx="21.500" cy="8" r="7.800" fill="#55b4ec" />
          <text x="18.500" y="12.500" fontSize="12" fill="#17324a" fontFamily="Liberation Sans, sans-serif">7</text>
        </Svg>
      </TaskApp>
      <TaskApp run>
        <Svg w={24} h={24}>
          <circle cx="12" cy="12" r="12" fill="#e0433a" /><path d="M12 6h10.400A12 12 0 0112 24l5.200-9z" fill="#f9c526" />
          <path d="M1.600 6A12 12 0 0012 24l5.200-9c-3 4-8 3.500-10.400 0z" fill="#2da04f" /><circle cx="12" cy="12" r="6" fill="#fff" /><circle cx="12" cy="12" r="4.700" fill="#3f7de8" />
        </Svg>
      </TaskApp>
      <TaskApp run>
        <Svg w={24} h={24}>
          <circle cx="12" cy="12" r="11.500" fill="#9dafb2" /><path d="M3 5c4-6 14-6 18 0l-3 3H6z" fill="#e7ebe6" />
          <path d="M6 4h12v2H6z" fill="#b3685a" /><path d="M2 10h20v3H2z" fill="#dce8e4" /><path d="M4 14l7 2-4 5z" fill="#cfd98e" /><circle cx="13" cy="17" r="4" fill="#4f8aa5" /><circle cx="13" cy="15" r="2" fill="#b9e0ee" />
        </Svg>
      </TaskApp>
      <TaskApp run>
        <Svg w={24} h={24}>
          <path d="M9.500 0h5l.800 3.500 2.500 1.200L21.500 4 24 8.500 21.500 11v2.500L24 16l-2.500 4-3.500-.800-2.500 1.300-1 3.500h-5l-1-3.500L6 19.200 2.500 20 0 16l2.500-2.500V11L0 8.500 2.500 4l3.700.700 2.500-1.200z" fill="#858a92" />
          <circle cx="12" cy="12" r="6" fill="#e4edf5" /><circle cx="12" cy="12" r="4.700" fill="#1f66ae" />
        </Svg>
      </TaskApp>
      <TaskApp active>
        <Svg w={24} h={17}><rect width="24" height="17" fill="#f6f6f6" /><rect x="7.500" y="3" width="9" height="12" fill="#2280cc" /><path d="M2 5h3M2 8h3M2 11h3M19 5h3M19 8h3" stroke="#cfcfcf" /></Svg>
      </TaskApp>
      <Svg w={11} h={7} className="ml-[56px]"><path d="M1 6l4.500-4.500L10 6" stroke="#e6dfdd" strokeWidth="1.500" /></Svg>
      <Svg w={17} h={14} className="ml-[17px]">
        <path d="M3 11a3.500 3.500 0 010-6.500 5 5 0 019-1A4 4 0 0115 11z" fill="#b7b1b0" /><circle cx="12.500" cy="9.500" r="4" fill="#8a8583" /><path d="M11.500 8v3.500M13.700 8v3.500" stroke="#eee" />
      </Svg>
      <div className="ml-[17px] flex w-[25px] flex-col items-center gap-[4px]"><Fit w={23}>ENG</Fit><Fit w={12}>IN</Fit></div>
      <Svg w={17} h={13} className="ml-[16px]">
        <path d="M1 5c4.500-5 10.500-5 15 0M3.500 7.500c3-3.500 7-3.500 10 0M6 9.800c1.700-1.700 3.300-1.700 5 0" stroke="#d6cecc" strokeWidth="1.500" /><circle cx="8.500" cy="11.300" r="1.400" fill="#e6dfdd" />
      </Svg>
      <Svg w={16} h={13} className="ml-[7px]"><path d="M1 4.500h2.500L7 1.500v10L3.500 8.500H1zM10.500 4.500l4 4M14.500 4.500l-4 4" stroke="#e6dfdd" strokeWidth="1.200" /></Svg>
      <Svg w={17} h={13} className="ml-[8px]"><rect x="2" y="4" width="12" height="8" rx="1.500" fill="#cfc8c6" stroke="#eee" /><path d="M15.500 6.500v3M3 0v4M1 2h5" stroke="#eee" strokeWidth="1.400" /></Svg>
      <div className="ml-[15px] flex w-[62px] flex-col items-end gap-[4px]"><Fit w={29}>12:22</Fit><Fit w={62}>02-11-2023</Fit></div>
      <Svg w={13} h={16} className="ml-[9px]"><path d="M6.500 0C9.500 0 11 2.500 11 5v3.500L13 12H0l2-3.500V5C2 2.500 3.500 0 6.500 0zM4.500 13h4c0 3-4 3-4 0z" fill="#73d6f5" /></Svg>
    </div>
  );
}

const Sep = ({ className = "" }) => <div className={"h-[22px] w-px bg-[#b5b5b5] " + className} />;

export default function App() {
  return (
    <div className={"h-[1108px] w-[2000px] overflow-hidden bg-white " + UI}>
      <h1 className="flex h-[130px] items-start pl-[303px] pt-[82px] font-['Liberation_Serif',serif] text-[38px] font-bold leading-[44px] text-black">
        <Fit w={30}>8.</Fit>
        <Fit w={703} className="ml-[30px]">Software Personnel Management System</Fit>
      </h1>
      <div className="ml-[363px] flex h-[852px] w-[1516px] flex-col overflow-hidden bg-[#eeeeee]">
        <header className="flex h-[23px] items-center bg-[#f9eeed] text-[11.500px] leading-none text-[#444]">
          <Svg w={17} h={17} className="ml-[1px]">
            <circle cx="4" cy="3" r="2.200" stroke="#e2523f" strokeWidth="1.500" /><path d="M4 5l1 5M1 8l7-2M2 14l3-4 3 2M6 5l4 5" stroke="#e2523f" strokeWidth="1.500" />
            <ellipse cx="12" cy="13" rx="3.800" ry="2.700" stroke="#e2523f" strokeWidth="1.600" transform="rotate(-15 12 13)" />
          </Svg>
          <Fit w={238} className="ml-[3px]">Untitled [modified] – Umbrello UML Modeller</Fit>
          <Svg w={10} h={10} className="ml-[1134px]"><path d="M0 4.500h10" stroke="#555" strokeWidth="1.200" /></Svg>
          <Svg w={11} h={11} className="ml-[36px]"><rect x="1" y="3" width="7" height="7" rx="1" stroke="#444" strokeWidth="1.300" /><path d="M3 1h6a1 1 0 011 1v6" stroke="#444" strokeWidth="1.300" /></Svg>
          <Svg w={10} h={10} className="ml-[36px]"><path d="M.500.500l9 9M9.500.500l-9 9" stroke="#444" strokeWidth="1.200" /></Svg>
        </header>
        <nav className="flex h-[19px] items-center border-b border-[#c6c6c6] pl-[5px] pt-[3px] text-[12px] leading-none text-[#444]">
          <Fit w={19}>File</Fit><Fit w={21} className="ml-[9px]">Edit</Fit><Fit w={46} className="ml-[10px]">Diagram</Fit>
          <Fit w={28} className="ml-[10px]">Code</Fit><Fit w={43} className="ml-[10px]">Settings</Fit><Fit w={26} className="ml-[9px]">Help</Fit>
        </nav>
        <div className="flex h-[26px] items-center border-b border-[#c6c6c6] pl-[6px] pt-[2px] text-[10.500px] leading-none text-[#333]">
          <span className="-mt-[2px]"><NewIcon /></span><Fit w={20} className="ml-[3px]">New</Fit>
          <span className="ml-[11px]"><OpenIcon /></span><Fit w={24} className="ml-[3px]">Open</Fit>
          <span className="ml-[12px]"><SaveIcon /></span><Fit w={22} className="ml-[3px]">Save</Fit>
          <span className="ml-[10px]"><PrintIcon /></span>
          <span className="ml-[6px]"><PrintIcon eye /></span>
          <Sep className="ml-[5px]" />
          <span className="ml-[5px] -mt-[4px]"><UndoIcon /></span>
          <span className="ml-[5px] -mt-[4px]"><UndoIcon gray /></span>
          <span className="ml-[6px]"><CutIcon /></span><Fit w={14} className="ml-[4px] text-[#9a9a9a]">Cut</Fit>
          <span className="ml-[14px]"><CopyIcon /></span><Fit w={22} className="ml-[4px] text-[#9a9a9a]">Copy</Fit>
          <span className="ml-[11px]"><PasteIcon /></span><Fit w={24} className="ml-[4px] text-[#9a9a9a]">Paste</Fit>
          <Sep className="ml-[9px]" />
          <span className="ml-[7px]"><FindIcon /></span><Fit w={19} className="ml-[3px]">Find</Fit>
        </div>
        <div className="flex h-[25px] items-center pl-[1px]">
          {[ArrowTool, XyzTool, BoxesTool, NoteTool, RectTool, AbTool, FxTool1, FxTool2, FoundTool, FoundTool, FragTool, PillTool].map((I, i) => (
            <span key={i} className="flex w-[22.900px] shrink-0 justify-center"><I right={i === 9} /></span>
          ))}
        </div>
        <div className="flex h-[684px] border-t border-[#a9a9a9]">
          <LeftDock />
          <div className="ml-[5px] w-[5px] shrink-0 border-l-2 border-r-2 border-[#9b9b9b] bg-[#dcdcdc]" />
          <Center />
          <BirdsEye />
        </div>
        <StatusBar />
        <Taskbar />
      </div>
    </div>
  );
}
